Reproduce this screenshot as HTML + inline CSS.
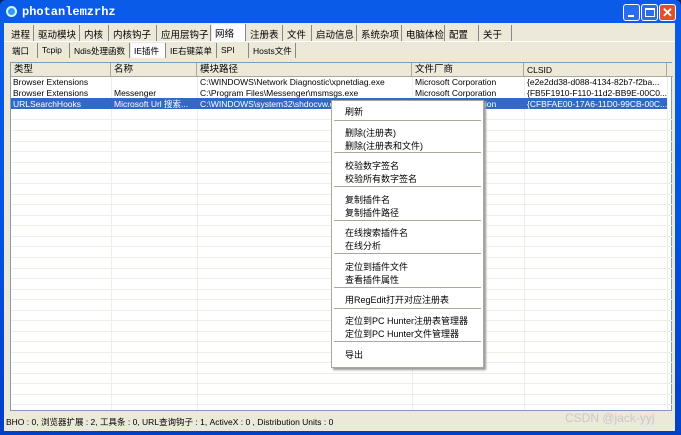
<!DOCTYPE html><html><head><meta charset="utf-8"><style>
*{margin:0;padding:0;box-sizing:border-box}
body{width:681px;height:435px;overflow:hidden;background:#0a246a;font-family:"Liberation Sans","Noto Sans CJK SC",sans-serif;font-size:9px;color:#000;position:relative}
.win{position:absolute;left:0;top:0;width:681px;height:435px;background:linear-gradient(#0a5ce8,#0054e3 50%,#0040c8);border-radius:6px 6px 0 0}
.title{position:absolute;left:22px;top:5px;color:#fff;font-family:"Liberation Mono",monospace;font-weight:bold;font-size:12px}
.ico{position:absolute;left:6px;top:6px;width:11px;height:11px;border-radius:50%;border:2px solid #cfe;background:#39f}
.btn{position:absolute;top:4px;width:17px;height:17px;border:1px solid #fff;border-radius:3px;background:#2a6cf0}
.client{position:absolute;left:4px;top:23px;width:671px;height:408px;background:#ece9d8}
.a{position:absolute;white-space:nowrap}
.tab{position:absolute;top:2px;height:16px;border-right:1px solid #888;padding:2px 0 0 3px;font-size:9.5px;white-space:nowrap;overflow:hidden}
.tab2{position:absolute;top:20px;height:15px;border-right:1px solid #888;padding:2px 0 0 3px;font-size:8.5px;white-space:nowrap;overflow:hidden}
.list{position:absolute;left:6px;top:39px;width:662px;height:349px;background:#fff;border:1px solid #7f9db9}
.hdr{position:absolute;top:0;height:14px;background:#ece9d8;border-right:1px solid #aca899;border-bottom:1px solid #aca899;padding:1px 3px;font-size:9.5px;line-height:12px}
.vl{position:absolute;top:14px;bottom:0;width:1px;background:#efeee6}
.hl{position:absolute;left:0;width:662px;height:1px;background:#efeee6}
.cell{position:absolute;font-size:8.5px;line-height:10px;white-space:nowrap;overflow:hidden}
.menu{position:absolute;left:331px;top:100px;width:153px;height:268px;background:#fff;border:1px solid #aca899;box-shadow:2px 2px 2px #999}
.mi{position:absolute;left:13px;font-size:9px;white-space:nowrap}
.sep{position:absolute;left:2px;right:2px;height:2px;border-top:1px solid #aca899;border-bottom:1px solid #fff}
</style></head><body><div class="win">
<div class="ico"></div><div class="title">photanlemzrhz</div>
<div class="btn" style="left:623px"><div style="position:absolute;left:4px;top:10px;width:6px;height:2px;background:#fff"></div></div>
<div class="btn" style="left:641px"><div style="position:absolute;left:3px;top:3px;width:10px;height:9px;border:1px solid #fff;border-top-width:2px"></div></div>
<div class="btn" style="left:659px;background:#e0502a;color:#fff;font-size:13px;text-align:center;line-height:15px;font-weight:bold">✕</div>
<div class="client">
<div class="tab" style="left:4px;width:26px">进程</div><div class="tab" style="left:31px;width:45px">驱动模块</div><div class="tab" style="left:77px;width:28px">内核</div><div class="tab" style="left:106px;width:47px">内核钩子</div><div class="tab" style="left:154px;width:53px">应用层钩子</div><div class="tab" style="left:208px;width:34px;background:#fcfcfe;top:1px;height:17px">网络</div><div class="tab" style="left:243px;width:36px">注册表</div><div class="tab" style="left:280px;width:28px">文件</div><div class="tab" style="left:309px;width:44px">启动信息</div><div class="tab" style="left:354px;width:44px">系统杂项</div><div class="tab" style="left:399px;width:42px">电脑体检</div><div class="tab" style="left:442px;width:33px">配置</div><div class="tab" style="left:476px;width:32px">关于</div>
<div style="position:absolute;left:0;top:18px;width:671px;height:1px;background:#fff"></div>
<div class="tab2" style="left:5px;width:29px">端口</div><div class="tab2" style="left:35px;width:31px">Tcpip</div><div class="tab2" style="left:67px;width:59px">Ndis处理函数</div><div class="tab2" style="left:127px;width:35px;background:#fcfcfe">IE插件</div><div class="tab2" style="left:163px;width:50px">IE右键菜单</div><div class="tab2" style="left:214px;width:31px">SPI</div><div class="tab2" style="left:246px;width:46px">Hosts文件</div>
<div class="list">
<div class="hdr" style="left:0;width:100px">类型</div><div class="hdr" style="left:100px;width:86px">名称</div><div class="hdr" style="left:186px;width:215px">模块路径</div><div class="hdr" style="left:401px;width:112px">文件厂商</div><div class="hdr" style="left:513px;width:143px;font-size:8.5px">CLSID</div><div class="hdr" style="left:656px;width:6px;border-right:0"></div>
<div class="vl" style="left:100px"></div><div class="vl" style="left:186px"></div><div class="vl" style="left:401px"></div><div class="vl" style="left:513px"></div><div class="vl" style="left:656px"></div>
<div class="hl" style="top:56px"></div><div class="hl" style="top:67px"></div><div class="hl" style="top:78px"></div><div class="hl" style="top:88px"></div><div class="hl" style="top:99px"></div><div class="hl" style="top:110px"></div><div class="hl" style="top:120px"></div><div class="hl" style="top:131px"></div><div class="hl" style="top:141px"></div><div class="hl" style="top:152px"></div><div class="hl" style="top:162px"></div><div class="hl" style="top:173px"></div><div class="hl" style="top:183px"></div><div class="hl" style="top:194px"></div><div class="hl" style="top:205px"></div><div class="hl" style="top:215px"></div><div class="hl" style="top:226px"></div><div class="hl" style="top:236px"></div><div class="hl" style="top:247px"></div><div class="hl" style="top:257px"></div><div class="hl" style="top:268px"></div><div class="hl" style="top:278px"></div><div class="hl" style="top:289px"></div><div class="hl" style="top:299px"></div><div class="hl" style="top:310px"></div><div class="hl" style="top:320px"></div><div class="hl" style="top:331px"></div><div class="hl" style="top:341px"></div>
<div style="position:absolute;left:0;top:35px;width:656px;height:11px;background:#316ac5"></div>
<div class="cell" style="left:2px;top:14px">Browser Extensions</div><div class="cell" style="left:189px;top:14px">C:\WINDOWS\Network Diagnostic\xpnetdiag.exe</div><div class="cell" style="left:404px;top:14px">Microsoft Corporation</div><div class="cell" style="left:516px;top:14px">{e2e2dd38-d088-4134-82b7-f2ba...</div>
<div class="cell" style="left:2px;top:25px">Browser Extensions</div><div class="cell" style="left:103px;top:25px">Messenger</div><div class="cell" style="left:189px;top:25px">C:\Program Files\Messenger\msmsgs.exe</div><div class="cell" style="left:404px;top:25px">Microsoft Corporation</div><div class="cell" style="left:516px;top:25px">{FB5F1910-F110-11d2-BB9E-00C0...</div>
<div class="cell" style="left:2px;top:36px;color:#fff">URLSearchHooks</div><div class="cell" style="left:103px;top:36px;color:#fff">Microsoft Url 搜索...</div><div class="cell" style="left:189px;top:36px;color:#fff">C:\WINDOWS\system32\shdocvw.dll</div><div class="cell" style="left:404px;top:36px;color:#fff">Microsoft Corporation</div><div class="cell" style="left:516px;top:36px;color:#fff">{CFBFAE00-17A6-11D0-99CB-00C...</div>
</div>
<div class="a" style="left:2px;top:393px;font-size:8.5px">BHO : 0, 浏览器扩展 : 2, 工具条 : 0, URL查询钩子 : 1, ActiveX : 0 , Distribution Units : 0</div>
<div class="a" style="left:561px;top:388px;font-size:12px;color:#c8c8c8">CSDN @jack-yyj</div>
</div>
<div class="menu">
<div class="mi" style="top:4px">刷新</div><div class="sep" style="top:19px"></div>
<div class="mi" style="top:25px">删除(注册表)</div><div class="mi" style="top:38px">删除(注册表和文件)</div><div class="sep" style="top:51px"></div>
<div class="mi" style="top:58px">校验数字签名</div><div class="mi" style="top:71px">校验所有数字签名</div><div class="sep" style="top:85px"></div>
<div class="mi" style="top:92px">复制插件名</div><div class="mi" style="top:105px">复制插件路径</div><div class="sep" style="top:119px"></div>
<div class="mi" style="top:125px">在线搜索插件名</div><div class="mi" style="top:138px">在线分析</div><div class="sep" style="top:152px"></div>
<div class="mi" style="top:159px">定位到插件文件</div><div class="mi" style="top:172px">查看插件属性</div><div class="sep" style="top:186px"></div>
<div class="mi" style="top:192px">用RegEdit打开对应注册表</div><div class="sep" style="top:207px"></div>
<div class="mi" style="top:213px">定位到PC Hunter注册表管理器</div><div class="mi" style="top:226px">定位到PC Hunter文件管理器</div><div class="sep" style="top:240px"></div>
<div class="mi" style="top:247px">导出</div>
</div>
</div></body></html>
